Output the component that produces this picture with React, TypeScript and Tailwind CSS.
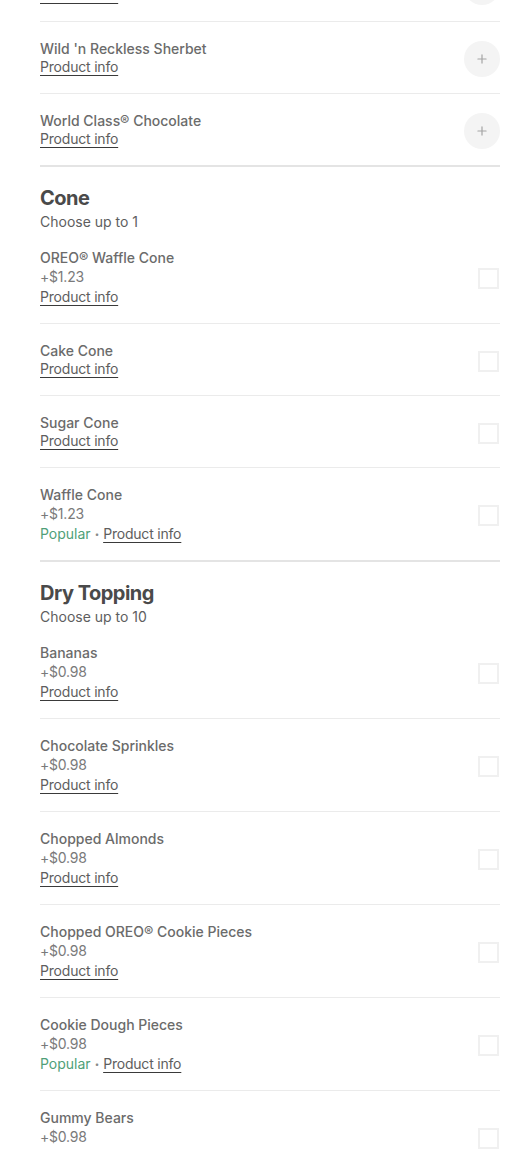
import { Plus } from 'lucide-react';

type Item = {
  name: string;
  price?: string;
  popular?: boolean;
};

type Group = {
  title?: string;
  subtitle?: string;
  control: 'plus' | 'check';
  items: Item[];
  offset?: boolean;
};

const groups: Group[] = [
  {
    control: 'plus',
    offset: true,
    items: [
      { name: 'Watermelon Sherbet' },
      { name: "Wild 'n Reckless Sherbet" },
      { name: 'World Class® Chocolate' },
    ],
  },
  {
    title: 'Cone',
    subtitle: 'Choose up to 1',
    control: 'check',
    items: [
      { name: 'OREO® Waffle Cone', price: '+$1.23' },
      { name: 'Cake Cone' },
      { name: 'Sugar Cone' },
      { name: 'Waffle Cone', price: '+$1.23', popular: true },
    ],
  },
  {
    title: 'Dry Topping',
    subtitle: 'Choose up to 10',
    control: 'check',
    items: [
      { name: 'Bananas', price: '+$0.98' },
      { name: 'Chocolate Sprinkles', price: '+$0.98' },
      { name: 'Chopped Almonds', price: '+$0.98' },
      { name: 'Chopped OREO® Cookie Pieces', price: '+$0.98' },
      { name: 'Cookie Dough Pieces', price: '+$0.98', popular: true },
      { name: 'Gummy Bears', price: '+$0.98' },
      { name: 'Heath® Toffee Pieces', price: '+$0.98' },
    ],
  },
];

function ProductInfo() {
  return (
    <span className="tracking-[-0.2px] text-[#5e5e5e] underline decoration-[#3a3a3a] underline-offset-[3px]">
      Product info
    </span>
  );
}

function Row({ item, control, last }: { item: Item; control: Group['control']; last: boolean }) {
  return (
    <div
      className={`flex items-center justify-between pt-[19px] pb-4 ${
        last ? '' : 'border-b border-[#ebebeb]'
      }`}
    >
      <div className="flex flex-col text-sm">
        <span className="font-medium leading-4 text-[#6b6b6b]">{item.name}</span>
        {item.price && (
          <span className="leading-[21px] tracking-[-0.2px] text-[#7a7a7a]">{item.price}</span>
        )}
        <span className="flex items-center leading-5">
          {item.popular && (
            <>
              <span className="text-[#4f9f78]">Popular</span>
              <span className="mx-[4px] text-[8px] text-[#8a8a8a]">•</span>
            </>
          )}
          <ProductInfo />
        </span>
      </div>
      {control === 'plus' ? (
        <button className="flex h-9 w-9 items-center justify-center rounded-full bg-[#f4f4f4]">
          <Plus className="h-3.5 w-3.5 text-[#a3a3a3]" strokeWidth={2} />
        </button>
      ) : (
        <span className="mr-[1px] h-[21px] w-[21px] border-2 border-[#f0f0f0]" />
      )}
    </div>
  );
}

export default function App() {
  return (
    <div
      className="min-h-screen overflow-hidden bg-white pl-10 pr-6"
      style={{ fontFamily: 'Inter, "Noto Sans", sans-serif' }}
    >
      {groups.map((group, gi) => (
        <section
          key={gi}
          className={`border-b-2 border-[#e4e4e4] ${group.offset ? '-mt-[50px]' : ''}`}
        >
          {group.title && (
            <div className="pt-[17px]">
              <h2 className="text-xl font-bold leading-7 tracking-tight text-[#4a4a4a]">
                {group.title}
              </h2>
              <p className="text-sm leading-[19px] text-[#5e5e5e]">{group.subtitle}</p>
            </div>
          )}
          {group.items.map((item, i) => (
            <Row
              key={item.name}
              item={item}
              control={group.control}
              last={i === group.items.length - 1}
            />
          ))}
        </section>
      ))}
    </div>
  );
}
